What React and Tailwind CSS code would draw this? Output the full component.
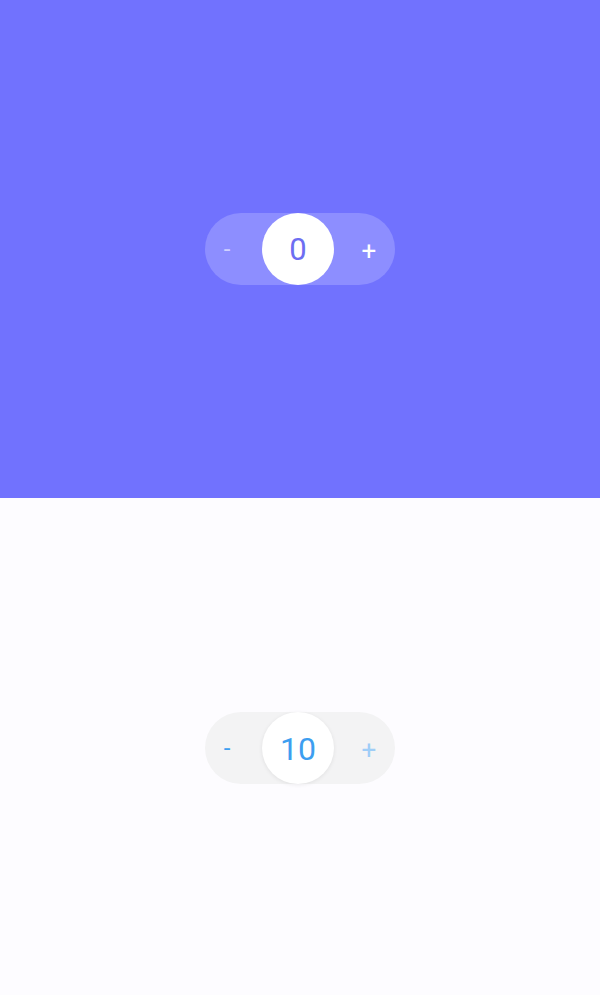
export default function App() {
  const font = { fontFamily: "Roboto, 'Liberation Sans', sans-serif" };
  return (
    <div className="w-[600px] h-[995px] flex flex-col" style={font}>
      <div className="h-[498px] bg-[#7172fe] flex items-center justify-center">
        <div className="w-[190px] h-[72px] rounded-full bg-[#8d8eff] flex items-center justify-between pl-[16px] pr-[18px]">
          <button className="w-[12px] text-[24px] text-white/60 leading-none">-</button>
          <div className="w-[72px] h-[72px] ml-[2px] rounded-full bg-white flex items-center justify-center text-[31px] text-[#6d6ef2] pt-[2px]">0</div>
          <button className="w-[16px] text-[26px] text-white leading-none pt-[3px]">+</button>
        </div>
      </div>
      <div className="h-[497px] bg-[#fdfcff] flex items-center justify-center pt-[3px]">
        <div className="w-[190px] h-[72px] rounded-full bg-[#f3f3f4] flex items-center justify-between pl-[16px] pr-[18px]">
          <button className="w-[12px] text-[24px] text-[#3d9ef0] leading-none">-</button>
          <div className="w-[72px] h-[72px] ml-[2px] rounded-full bg-white shadow-[0_1px_4px_rgba(0,0,0,0.08)] flex items-center justify-center text-[32px] text-[#3d9ef0] pt-[2px]">10</div>
          <button className="w-[16px] text-[26px] text-[#9fcdf7] leading-none pt-[3px]">+</button>
        </div>
      </div>
    </div>
  );
}
